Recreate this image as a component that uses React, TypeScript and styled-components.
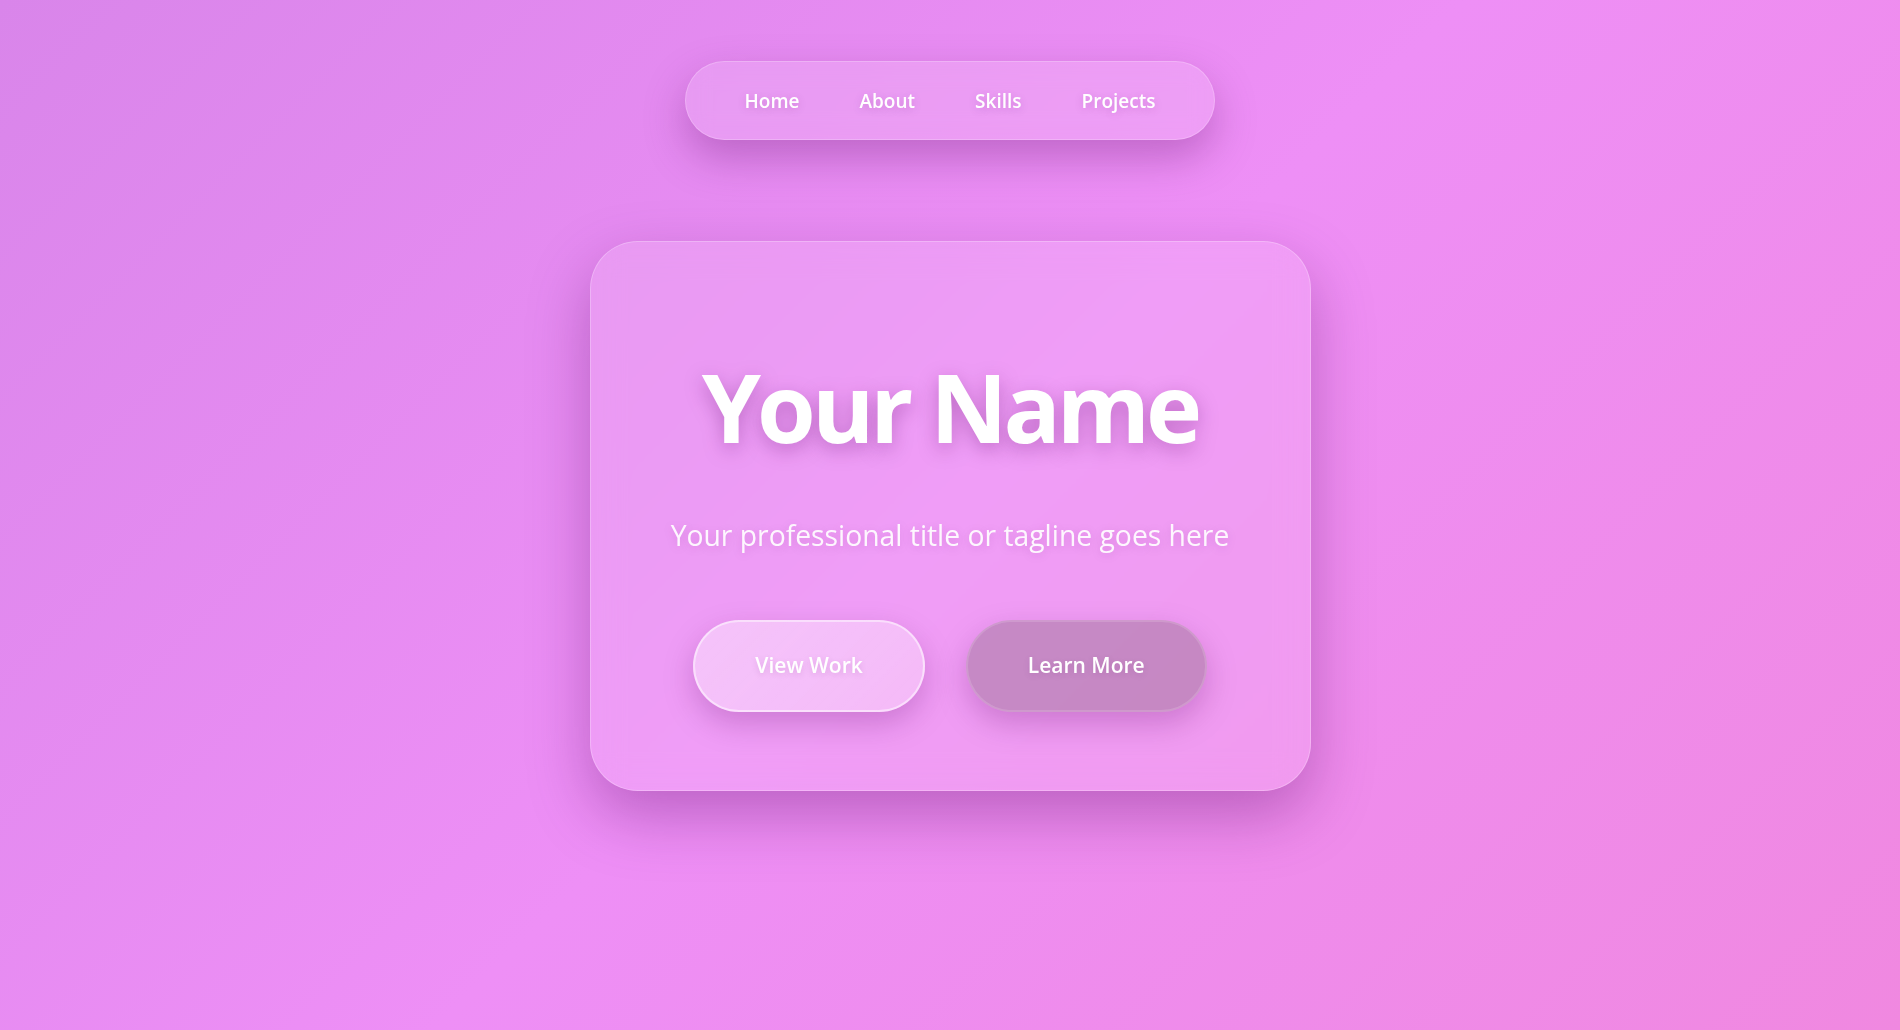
import React from "react";
import styled, { createGlobalStyle } from "styled-components";

const GlobalStyle = createGlobalStyle`
  html, body {
    margin: 0;
    padding: 0;
  }
  body {
    font-family: "Open Sans", "Noto Sans", "Liberation Sans", sans-serif;
    background: linear-gradient(135deg, #d985ea 0%, #ee8ff6 50%, #f088e0 100%);
    background-attachment: fixed;
    min-height: 100vh;
    color: #fff;
  }
  * { box-sizing: border-box; }
`;

const Page = styled.div`
  min-height: 100vh;
  display: flex;
  flex-direction: column;
  align-items: center;
  padding-top: 61px;
`;

const Nav = styled.nav`
  display: flex;
  align-items: center;
  gap: 20px;
  height: 79px;
  padding: 0 39px;
  border-radius: 40px;
  background: rgba(255, 255, 255, 0.14);
  border: 1px solid rgba(255, 255, 255, 0.22);
  box-shadow: 0 18px 40px rgba(110, 30, 120, 0.34);
  backdrop-filter: blur(12px);
`;

const NavLink = styled.a`
  color: #fff;
  font-size: 19px;
  font-weight: 600;
  padding: 8px 20px;
  text-decoration: none;
  text-shadow: 0 2px 8px rgba(90, 20, 100, 0.2);
  cursor: pointer;
`;

const Card = styled.main`
  margin-top: 101px;
  width: 721px;
  padding: 80px 80px 78px;
  border-radius: 48px;
  background: rgba(255, 255, 255, 0.13);
  border: 1px solid rgba(255, 255, 255, 0.25);
  box-shadow: 0 25px 60px rgba(100, 20, 110, 0.36);
  backdrop-filter: blur(16px);
  display: flex;
  flex-direction: column;
  align-items: center;
  text-align: center;
`;

const Title = styled.h1`
  margin: 27px 0 50px;
  font-size: 95px;
  line-height: 1.2;
  font-weight: 700;
  letter-spacing: -4px;
  color: #fff;
  white-space: nowrap;
  text-shadow: 0 6px 20px rgba(110, 30, 120, 0.38);
`;

const Subtitle = styled.p`
  margin: 0 0 62px;
  font-size: 28.3px;
  line-height: 1.6;
  font-weight: 400;
  color: rgba(255, 255, 255, 0.92);
  white-space: nowrap;
  text-shadow: 0 2px 10px rgba(110, 30, 120, 0.2);
`;

const Buttons = styled.div`
  display: flex;
  gap: 41px;
  justify-content: center;
`;

const Button = styled.button<{ $variant: "primary" | "secondary" }>`
  font-family: inherit;
  font-size: 21px;
  font-weight: 600;
  line-height: 1.5;
  color: #fff;
  padding: 28px 60px;
  border-radius: 50px;
  cursor: pointer;
  text-shadow: 0 2px 6px rgba(90, 20, 100, 0.15);
  border: 2px solid
    ${(p) =>
      p.$variant === "primary"
        ? "rgba(255, 255, 255, 0.5)"
        : "rgba(255, 255, 255, 0.14)"};
  background: ${(p) =>
    p.$variant === "primary"
      ? "linear-gradient(135deg, rgba(255,255,255,0.4), rgba(255,255,255,0.3))"
      : "rgba(30, 60, 10, 0.2)"};
  box-shadow: 0 12px 30px rgba(110, 30, 120, 0.28);
`;

export default function App() {
  return (
    <>
      <GlobalStyle />
      <Page>
        <Nav>
          <NavLink>Home</NavLink>
          <NavLink>About</NavLink>
          <NavLink>Skills</NavLink>
          <NavLink>Projects</NavLink>
        </Nav>
        <Card>
          <Title>Your Name</Title>
          <Subtitle>Your professional title or tagline goes here</Subtitle>
          <Buttons>
            <Button $variant="primary">View Work</Button>
            <Button $variant="secondary">Learn More</Button>
          </Buttons>
        </Card>
      </Page>
    </>
  );
}
